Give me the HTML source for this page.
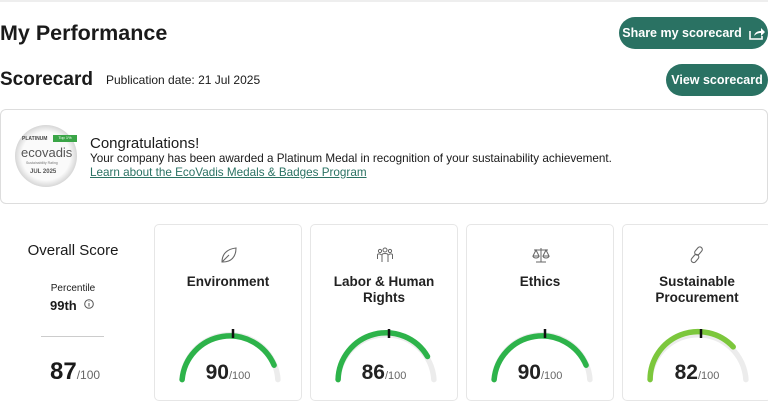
<!DOCTYPE html>
<html><head><meta charset="utf-8"><style>
*{margin:0;padding:0;box-sizing:border-box}
body{width:768px;height:413px;overflow:hidden;background:#fff;font-family:"Liberation Sans",sans-serif;color:#1a1a1a;position:relative}
.a{position:absolute}
.btn{position:absolute;background:#2a7263;color:#fff;font-weight:bold;font-size:12.5px;border-radius:17px;display:flex;align-items:center;justify-content:center;white-space:nowrap}
.card{position:absolute;top:224px;width:148px;height:177px;border:1px solid #e6e6e6;border-radius:5px;background:#fff}
.card .t{position:absolute;left:0;right:0;top:49px;text-align:center;font-weight:bold;font-size:13.5px;line-height:16px;color:#222}
.card svg.g{position:absolute;left:0;top:95px}
.card .s{position:absolute;left:0;right:0;top:136px;text-align:center;font-weight:bold;font-size:21px;color:#222}
.card .s small,.big small{font-size:11px;color:#666;font-weight:normal}
.ic{position:absolute;left:64px;top:20px}
</style></head><body>
<div class="a" style="left:0;top:0;width:768px;height:2px;background:#eee"></div>
<div class="a" style="left:0;top:21px;font-size:21.5px;font-weight:bold">My Performance</div>
<div class="btn" style="left:619px;top:17px;width:149px;height:32px">Share my scorecard&nbsp;&nbsp;<svg width="16" height="13" viewBox="0 0 16 13"><path d="M1 4v8h12v-3" fill="none" stroke="#fff" stroke-width="1.6"/><path d="M5 9c1-4 4-5 7-5V1l4 4-4 4V6c-3 0-5 1-7 3z" fill="#fff"/></svg></div>
<div class="a" style="left:0;top:69px;font-size:19px;font-weight:bold">Scorecard</div>
<div class="a" style="left:106px;top:73px;font-size:12px">Publication date: 21 Jul 2025</div>
<div class="btn" style="left:666px;top:64px;width:102px;height:32px">View scorecard</div>

<div class="a" style="left:0;top:109px;width:768px;height:95px;border:1px solid #ddd;border-radius:6px"></div>
<div class="a" style="left:15px;top:125px;width:62px;height:62px;border-radius:50%;background:radial-gradient(circle,#fafafa 55%,#d8d8d8 70%,#c4c4c4 100%)"></div>
<div class="a" style="left:22px;top:136px;font-size:5px;font-weight:bold;color:#444">PLATINUM</div>
<div class="a" style="left:53px;top:135px;width:24px;height:7px;background:#3aa547;color:#fff;font-size:4px;text-align:center">Top 1%</div>
<div class="a" style="left:21px;top:145px;font-size:13px;color:#555">ecovadis</div>
<div class="a" style="left:26px;top:161px;font-size:3.5px;color:#777">Sustainability Rating</div>
<div class="a" style="left:30px;top:169px;font-size:6px;font-weight:bold;color:#555">JUL 2025</div>
<div class="a" style="left:90px;top:135px;font-size:15px">Congratulations!</div>
<div class="a" style="left:90px;top:152px;font-size:11.7px">Your company has been awarded a Platinum Medal in recognition of your sustainability achievement.</div>
<div class="a" style="left:90px;top:166px;font-size:11.7px;color:#2a7263;text-decoration:underline">Learn about the EcoVadis Medals &amp; Badges Program</div>

<div class="a" style="left:0;width:146px;top:242px;text-align:center;font-size:15px">Overall Score</div>
<div class="a" style="left:0;width:146px;top:283px;text-align:center;font-size:10px">Percentile</div>
<div class="a" style="left:50px;top:298px;font-size:13px;font-weight:bold">99th</div>
<svg class="a" style="left:84px;top:299px" width="10" height="10"><circle cx="5" cy="5" r="4.3" fill="none" stroke="#555"/><path d="M5 4v3.5M5 2.5v.5" stroke="#555"/></svg>
<div class="a" style="left:41px;top:336px;width:63px;height:1px;background:#ccc"></div>
<div class="a big" style="left:50px;top:358px;font-size:24px;font-weight:bold">87<small style="font-size:12px">/100</small></div>

<div class="card" style="left:154px">
<svg class="ic" width="20" height="20" viewBox="0 0 20 20" fill="none" stroke="#666" stroke-width="1.1"><path d="M3 17C3 9 8 4 17 3c0 9-5 14-13 14zM3 17l7-7"/></svg>
<div class="t">Environment</div>
<svg class="g" width="148" height="65"><path d="M27.1 59.6A48 48 0 0 1 122.9 59.6" fill="none" stroke="#ececec" stroke-width="5.5" stroke-linecap="round"/><path d="M27.1 59.6A48 48 0 0 1 119.1 45.2" fill="none" stroke="#2db34a" stroke-width="5.5" stroke-linecap="round"/><path d="M78 9v9" stroke="#111" stroke-width="2.5"/></svg>
<div class="s">90<small>/100</small></div></div>

<div class="card" style="left:310px">
<svg class="ic" width="20" height="20" viewBox="0 0 20 20" fill="none" stroke="#666" stroke-width="1"><circle cx="10" cy="5" r="2"/><circle cx="5" cy="6" r="1.6"/><circle cx="15" cy="6" r="1.6"/><path d="M7 17v-7c0-2 6-2 6 0v7M2.5 14v-4c0-1.5 3-1.5 4 0M17.5 14v-4c0-1.5-3-1.5-4 0"/></svg>
<div class="t">Labor &amp; Human<br>Rights</div>
<svg class="g" width="148" height="65"><path d="M27.1 59.6A48 48 0 0 1 122.9 59.6" fill="none" stroke="#ececec" stroke-width="5.5" stroke-linecap="round"/><path d="M27.1 59.6A48 48 0 0 1 116.5 36.5" fill="none" stroke="#2db34a" stroke-width="5.5" stroke-linecap="round"/><path d="M78 9v9" stroke="#111" stroke-width="2.5"/></svg>
<div class="s">86<small>/100</small></div></div>

<div class="card" style="left:466px">
<svg class="ic" width="20" height="20" viewBox="0 0 20 20" fill="none" stroke="#666" stroke-width="1"><path d="M10 3v14M5 17h10M3 5h14M5 5l-3 6h6zM15 5l-3 6h6zM2 11a3 2 0 0 0 6 0M12 11a3 2 0 0 0 6 0"/></svg>
<div class="t">Ethics</div>
<svg class="g" width="148" height="65"><path d="M27.1 59.6A48 48 0 0 1 122.9 59.6" fill="none" stroke="#ececec" stroke-width="5.5" stroke-linecap="round"/><path d="M27.1 59.6A48 48 0 0 1 119.1 45.2" fill="none" stroke="#2db34a" stroke-width="5.5" stroke-linecap="round"/><path d="M78 9v9" stroke="#111" stroke-width="2.5"/></svg>
<div class="s">90<small>/100</small></div></div>

<div class="card" style="left:622px;width:150px">
<svg class="ic" width="20" height="20" viewBox="0 0 20 20" fill="none" stroke="#666" stroke-width="1.1"><rect x="9" y="1.5" width="5" height="9" rx="2.5" transform="rotate(40 11.5 6)"/><rect x="5.5" y="9" width="5" height="9" rx="2.5" transform="rotate(40 8 13.5)"/></svg>
<div class="t">Sustainable<br>Procurement</div>
<svg class="g" width="148" height="65"><path d="M27.1 59.6A48 48 0 0 1 122.9 59.6" fill="none" stroke="#ececec" stroke-width="5.5" stroke-linecap="round"/><path d="M27.1 59.6A48 48 0 0 1 110.2 26.9" fill="none" stroke="#7cc73c" stroke-width="5.5" stroke-linecap="round"/><path d="M78 9v9" stroke="#111" stroke-width="2.5"/></svg>
<div class="s">82<small>/100</small></div></div>
</body></html>
